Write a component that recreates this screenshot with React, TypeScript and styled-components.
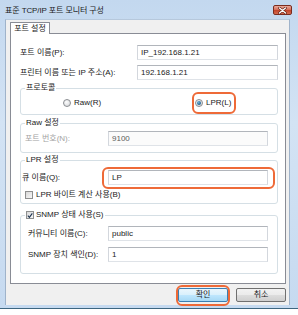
import React from 'react';
import styled, { createGlobalStyle, css } from 'styled-components';

const GlobalStyle = createGlobalStyle`
	html, body {
		margin: 0;
		padding: 0;
		background: #ffffff;
	}
	body {
		font-family: "Liberation Sans", "Noto Sans CJK KR", sans-serif;
		font-size: 8px;
		line-height: 10px;
		color: #1a1a1a;
	}
	* {
		box-sizing: border-box;
	}
`;

const Window = styled.div`
	width: 298px;
	height: 309px;
	display: flex;
	flex-direction: column;
	padding: 0 8px 3px 5px;
	background: linear-gradient(to bottom, #c3d8ef 0%, #d3e3f4 40%, #c6daf0 100%);
	border-bottom: 1px solid #3d6680;
`;

const TitleBar = styled.div`
	height: 19px;
	flex: 0 0 19px;
	display: flex;
	align-items: center;
	justify-content: space-between;
	padding: 2px 0 0 0;
`;

const Title = styled.div`
	font-size: 8px;
	color: #1b1b1b;
	letter-spacing: -0.1px;
`;

const CloseButton = styled.div`
	width: 19px;
	height: 10px;
	margin-right: -2px;
	margin-top: -1px;
	border: 1px solid #7a2c1f;
	border-radius: 2px;
	background: linear-gradient(to bottom, #e9a99a 0%, #d7705c 45%, #c2452c 55%, #d56a4d 100%);
	display: flex;
	align-items: center;
	justify-content: center;
`;

const Body = styled.div`
	flex: 1;
	display: flex;
	flex-direction: column;
	background: #f0f0f0;
	border-left: 1px solid #9fb3ca;
	border-right: 1px solid #9fb3ca;
	border-top: 1px solid #b6c8dc;
	padding: 2px 3px 3px 4px;
`;

const TabStrip = styled.div`
	display: flex;
	height: 12px;
`;

const Tab = styled.div`
	position: relative;
	z-index: 1;
	width: 40px;
	height: 12px;
	background: #ffffff;
	border: 1px solid #898c95;
	border-bottom: none;
	border-radius: 1px 1px 0 0;
	display: flex;
	align-items: center;
	justify-content: center;
`;

const Panel = styled.div`
	margin-top: -1px;
	height: 251px;
	background: #ffffff;
	border: 1px solid #898c95;
	padding: 11px 7px 0 9px;
	display: flex;
	flex-direction: column;
`;

const Row = styled.div<{ $top?: number }>`
	display: flex;
	align-items: center;
	height: 15px;
	margin-top: ${(p) => p.$top ?? 0}px;
`;

const Label = styled.span<{ $width: number; $disabled?: boolean }>`
	width: ${(p) => p.$width}px;
	flex: 0 0 auto;
	color: ${(p) => (p.$disabled ? '#a3a3a3' : '#1a1a1a')};
	white-space: nowrap;
`;

const TextBox = styled.div<{ $width: number; $disabled?: boolean }>`
	position: relative;
	width: ${(p) => p.$width}px;
	height: 15px;
	border: 1px solid;
	border-color: #b1b5bb #d3d7dd #dfe3e8 #d3d7dd;
	background: ${(p) => (p.$disabled ? '#fbfbfb' : '#ffffff')};
	color: ${(p) => (p.$disabled ? '#5c5c5c' : '#1a1a1a')};
	padding-left: 3px;
	display: flex;
	align-items: center;
	white-space: nowrap;
`;

/* orange annotation rings drawn over the dialog */
const Highlight = styled.div<{ $inset: string }>`
	position: absolute;
	inset: ${(p) => p.$inset};
	border: 2px solid #ee6a38;
	border-radius: 6px;
	pointer-events: none;
`;

const Group = styled.fieldset<{ $top: number; $height: number }>`
	margin: ${(p) => p.$top}px 0 0 0;
	padding: 0;
	height: ${(p) => p.$height}px;
	border: 1px solid #d5dfe5;
	border-radius: 3px;
	min-width: 0;
`;

const Legend = styled.legend`
	margin-left: 4px;
	padding: 0 1px;
	height: 10px;
	line-height: 10px;
	display: flex;
	align-items: center;
	gap: 2px;
`;

const GroupBody = styled.div<{ $pt: number; $gap?: number; $pl?: number }>`
	padding: ${(p) => p.$pt}px 9px 0 ${(p) => p.$pl ?? 4}px;
	display: flex;
	flex-direction: column;
	gap: ${(p) => p.$gap ?? 0}px;
`;

const RadioRow = styled.div`
	display: grid;
	grid-template-columns: 1fr 1fr;
	height: 10px;
	margin-top: 5px;
`;

const RadioItem = styled.div<{ $pl: number }>`
	display: flex;
	align-items: center;
	padding-left: ${(p) => p.$pl}px;
`;

const RadioWrap = styled.span`
	position: relative;
	display: inline-flex;
	align-items: center;
	gap: 3px;
`;

const Radio = styled.span<{ $checked?: boolean }>`
	width: 8px;
	height: 8px;
	border-radius: 50%;
	border: 1px solid #8a8d91;
	background: radial-gradient(circle at 40% 35%, #fdfdfd 0%, #d9dbde 80%);
	display: inline-flex;
	align-items: center;
	justify-content: center;
	${(p) =>
		p.$checked &&
		css`
			&::after {
				content: '';
				width: 4px;
				height: 4px;
				border-radius: 50%;
				background: radial-gradient(circle at 40% 35%, #6fb1d6 0%, #1f5f8f 70%);
			}
		`}
`;

const CheckRow = styled.div`
	display: flex;
	align-items: center;
	gap: 3px;
	height: 10px;
	padding-left: 3px;
`;

const Check = styled.span`
	width: 8px;
	height: 8px;
	border: 1px solid #8e8f8f;
	background: linear-gradient(135deg, #d8d8d8 0%, #f7f7f7 100%);
	display: inline-flex;
	align-items: center;
	justify-content: center;
`;

const ButtonBar = styled.div`
	display: flex;
	justify-content: flex-end;
	gap: 8px;
	margin-top: 4px;
`;

const Button = styled.div<{ $primary?: boolean }>`
	position: relative;
	width: 50px;
	height: 14px;
	border-radius: 2px;
	display: flex;
	align-items: center;
	justify-content: center;
	border: 1px solid ${(p) => (p.$primary ? '#3c7fb1' : '#707070')};
	background: ${(p) =>
		p.$primary
			? 'linear-gradient(to bottom, #eaf6fd 0%, #d9f0fc 48%, #bee6fd 52%, #a7d9f5 100%)'
			: 'linear-gradient(to bottom, #f2f2f2 0%, #ebebeb 48%, #dddddd 52%, #cfcfcf 100%)'};
`;

const CloseGlyph = () => (
	<svg width="9" height="7" viewBox="0 0 9 7">
		<path d="M1.5 1 L7.5 6 M7.5 1 L1.5 6" stroke="#5a1c12" strokeWidth="2.6" strokeLinecap="round" />
		<path d="M1.5 1 L7.5 6 M7.5 1 L1.5 6" stroke="#ffffff" strokeWidth="1.4" strokeLinecap="round" />
	</svg>
);

const CheckMark = () => (
	<svg width="7" height="7" viewBox="0 0 7 7">
		<path d="M1 3.6 L2.8 5.6 L6.2 1" fill="none" stroke="#1d3350" strokeWidth="1.3" />
	</svg>
);

const App: React.FC = () => {
	return (
		<>
			<GlobalStyle />
			<Window>
				<TitleBar>
					<Title>표준 TCP/IP 포트 모니터 구성</Title>
					<CloseButton>
						<CloseGlyph />
					</CloseButton>
				</TitleBar>
				<Body>
					<TabStrip>
						<Tab>포트 설정</Tab>
					</TabStrip>
					<Panel>
						<Row>
							<Label $width={117}>포트 이름(P):</Label>
							<TextBox $width={141}>IP_192.168.1.21</TextBox>
						</Row>
						<Row $top={5}>
							<Label $width={117}>프린터 이름 또는 IP 주소(A):</Label>
							<TextBox $width={141}>192.168.1.21</TextBox>
						</Row>

						<Group $top={3} $height={32}>
							<Legend>프로토콜</Legend>
							<RadioRow>
								<RadioItem $pl={42}>
									<RadioWrap>
										<Radio />
										<span>Raw(R)</span>
									</RadioWrap>
								</RadioItem>
								<RadioItem $pl={46}>
									<RadioWrap>
										<Radio $checked />
										<span>LPR(L)</span>
										<Highlight $inset="-6px -5px -6px -3px" />
									</RadioWrap>
								</RadioItem>
							</RadioRow>
						</Group>

						<Group $top={3} $height={35}>
							<Legend>Raw 설정</Legend>
							<GroupBody $pt={3}>
								<Row>
									<Label $width={83} $disabled>
										포트 번호(N):
									</Label>
									<TextBox $width={160} $disabled>
										9100
									</TextBox>
								</Row>
							</GroupBody>
						</Group>

						<Group $top={2} $height={49}>
							<Legend>LPR 설정</Legend>
							<GroupBody $pt={5} $gap={5} $pl={1}>
								<Row>
									<Label $width={86}>큐 이름(Q):</Label>
									<TextBox $width={160}>
										LP
										<Highlight $inset="-4px -8px -5px -7px" />
									</TextBox>
								</Row>
								<CheckRow>
									<Check />
									<span>LPR 바이트 계산 사용(B)</span>
								</CheckRow>
							</GroupBody>
						</Group>

						<Group $top={6} $height={64}>
							<Legend>
								<Check>
									<CheckMark />
								</Check>
								<span>SNMP 상태 사용(S)</span>
							</Legend>
							<GroupBody $pt={6} $gap={6} $pl={7}>
								<Row>
									<Label $width={80}>커뮤니티 이름(C):</Label>
									<TextBox $width={160}>public</TextBox>
								</Row>
								<Row>
									<Label $width={80}>SNMP 장치 색인(D):</Label>
									<TextBox $width={160}>1</TextBox>
								</Row>
							</GroupBody>
						</Group>
					</Panel>
					<ButtonBar>
						<Button $primary>
							확인
							<Highlight $inset="-4px -3px -5px -3px" />
						</Button>
						<Button>취소</Button>
					</ButtonBar>
				</Body>
			</Window>
		</>
	);
};

export default App;
